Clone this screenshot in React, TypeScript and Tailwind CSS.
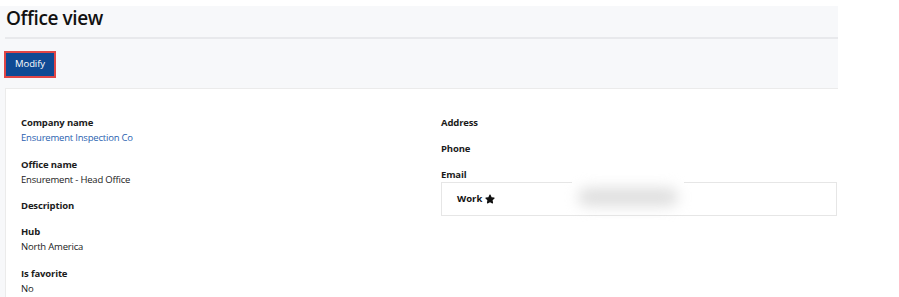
import { FaStar } from "react-icons/fa";

const font = { fontFamily: '"Open Sans", "Noto Sans", sans-serif' };

const Field = ({ label, value, link }: { label: string; value?: string; link?: boolean }) => (
    <div className="mb-[11px]">
        <div className="text-[9.5px] font-bold leading-[15px] tracking-[-0.15px] text-[#1b1b1b]">{label}</div>
        {value && (
            <div className={`text-[9.5px] leading-[15.5px] tracking-[-0.2px] ${link ? "text-[#2a62b0]" : "text-[#1b1b1b]"}`}>{value}</div>
        )}
    </div>
);

export default function App() {
    return (
        <div className="w-[899px] h-[297px] overflow-hidden bg-white pt-[6px]" style={font}>
            <div className="w-[838px] h-[291px] bg-[#f7f8fa]">
                <h1 className="pl-[6px] text-[19px] font-semibold leading-[24px] tracking-[-0.4px] text-[#111]">Office view</h1>
                <div className="ml-[5px] mt-[7px] h-[2px] bg-[#e8e9ec]"></div>
                <div className="pl-[4px] pt-[10px]">
                    <button className="h-[27px] w-[52px] border-2 border-[#e04646] bg-[#0f4a94] text-[9.5px] font-medium tracking-[-0.1px] text-white">
                        Modify
                    </button>
                </div>
                <div className="ml-[5px] mt-[10px] h-[300px] border-l border-t border-[#ebebeb] bg-white pl-[15px] pt-[26.5px]">
                    <div className="grid grid-cols-[420px_1fr]">
                        <div>
                            <Field label="Company name" value="Ensurement Inspection Co" link />
                            <Field label="Office name" value="Ensurement - Head Office" />
                            <Field label="Description" />
                            <Field label="Hub" value="North America" />
                            <Field label="Is favorite" value="No" />
                        </div>
                        <div>
                            <Field label="Address" />
                            <div className="mt-[2px]">
                                <Field label="Phone" />
                            </div>
                            <div className="text-[9.5px] font-bold leading-[15px] tracking-[-0.15px] text-[#1b1b1b]">Email</div>
                            <div className="relative flex h-[34px] w-[396px] items-center border border-[#e6e6e6] pl-[15px]">
                                <span className="text-[9.5px] font-bold text-[#111]">Work</span>
                                <FaStar className="ml-[3px] text-[10px] text-[#111]" />
                                <div className="absolute left-[130px] top-[-3px] flex h-[34px] w-[112px] items-center justify-center bg-white">
                                    <div className="h-[18px] w-[100px] rounded-full bg-[#dedede] blur-[7px]"></div>
                                </div>
                            </div>
                        </div>
                    </div>
                </div>
            </div>
        </div>
    );
}
